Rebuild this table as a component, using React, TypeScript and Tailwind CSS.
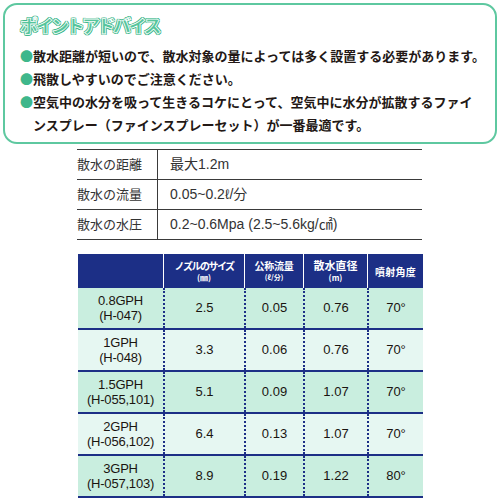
import React from 'react';

const navy = 'border-[#1c2f86]';

const specs = [
  { label: '散水の距離', value: '最大1.2m' },
  { label: '散水の流量', value: '0.05~0.2ℓ/分' },
  { label: '散水の水圧', value: '0.2~0.6Mpa (2.5~5.6kg/㎠)' },
];

const rows = [
  { name: '0.8GPH', code: '(H-047)', size: '2.5', flow: '0.05', dia: '0.76', angle: '70°' },
  { name: '1GPH', code: '(H-048)', size: '3.3', flow: '0.06', dia: '0.76', angle: '70°' },
  { name: '1.5GPH', code: '(H-055,101)', size: '5.1', flow: '0.09', dia: '1.07', angle: '70°' },
  { name: '2GPH', code: '(H-056,102)', size: '6.4', flow: '0.13', dia: '1.07', angle: '70°' },
  { name: '3GPH', code: '(H-057,103)', size: '8.9', flow: '0.19', dia: '1.22', angle: '80°' },
];

const Bullet = ({ lines }: { lines: string[] }) => (
  <div className="flex">
    <span className="w-[13px] shrink-0 text-[#3fb78b]">●</span>
    <div>
      {lines.map((l) => (
        <div key={l} className="whitespace-nowrap">{l}</div>
      ))}
    </div>
  </div>
);

export default function App() {
  return (
    <div className="w-[500px] h-[500px] overflow-hidden bg-white text-[#231815] [font-family:'Liberation_Sans','Noto_Sans_CJK_JP',sans-serif]">
      {/* ポイントアドバイス */}
      <div className="mx-[3px] mt-[3px] h-[141px] rounded-[14px] border-2 border-[#5ec8a0] pl-[15px] pt-[9px] [font-family:'Noto_Sans_CJK_JP',sans-serif]">
        <div className="h-[22px] text-[18px] leading-[22px] font-black tracking-[-2.5px] text-[#55c59b] [-webkit-text-stroke:0.8px_#ffffff] [text-shadow:1px_0_0_#3fb78b,-1px_0_0_#3fb78b,0_1px_0_#3fb78b,0_-1px_0_#3fb78b,1px_1px_0_#3fb78b,-1px_-1px_0_#3fb78b,1px_-1px_0_#3fb78b,-1px_1px_0_#3fb78b]">
          ポイントアドバイス
        </div>
        <div className="mt-[8px] text-[13px] leading-[23px] font-bold">
          <Bullet lines={['散水距離が短いので、散水対象の量によっては多く設置する必要があります。']} />
          <Bullet lines={['飛散しやすいのでご注意ください。']} />
          <Bullet
            lines={[
              '空気中の水分を吸って生きるコケにとって、空気中に水分が拡散するファイ',
              'ンスプレー（ファインスプレーセット）が一番最適です。',
            ]}
          />
        </div>
      </div>

      {/* 仕様 */}
      <div className="ml-[77px] mt-[5px] w-[345px] border-t border-[#3a3a3a]">
        {specs.map((s) => (
          <div key={s.label} className="flex h-[30px] border-b border-[#3a3a3a]">
            <div className="flex w-[81px] items-center border-r border-[#3a3a3a] text-[13px] text-[#333]">
              {s.label}
            </div>
            <div className="flex items-center pl-[12px] text-[14px] text-[#333]">{s.value}</div>
          </div>
        ))}
      </div>

      {/* ノズル表 */}
      <div className="ml-[78px] mt-[14px] w-[345px]">
        <div className="flex h-[34px] bg-[#1c2f86] font-bold text-white [font-family:'Noto_Sans_CJK_JP',sans-serif]">
          <div className="w-[85px]" />
          <div className="flex w-[81px] flex-col items-center justify-center border-l-[1.5px] border-white">
            <span className="text-[10px] leading-[13px] tracking-[-1.5px]">ノズルのサイズ</span>
            <span className="text-[8px] leading-[11px]">(㎜)</span>
          </div>
          <div className="flex w-[59px] flex-col items-center justify-center border-l-[1.5px] border-white">
            <span className="text-[10px] leading-[13px] tracking-[-0.3px]">公称流量</span>
            <span className="text-[7px] leading-[11px]">(ℓ/分)</span>
          </div>
          <div className="flex w-[64px] flex-col items-center justify-center border-l-[1.5px] border-white">
            <span className="text-[11px] leading-[13px]">散水直径</span>
            <span className="text-[8px] leading-[11px]">(m)</span>
          </div>
          <div className="flex w-[56px] items-center justify-center border-l-[1.5px] border-white">
            <span className="text-[10px] tracking-[0.3px]">噴射角度</span>
          </div>
        </div>
        {rows.map((r, i) => (
          <div
            key={r.name}
            className={`flex h-[42px] border-b-2 ${navy} text-[13px] text-[#1a1410] ${i % 2 === 0 ? 'bg-[#c9eedf]' : 'bg-[#e6f7f2]'}`}
          >
            <div className="flex w-[85px] flex-col items-center justify-center leading-[15px] tracking-[-0.2px]">
              <span>{r.name}</span>
              <span>{r.code}</span>
            </div>
            <div className={`flex w-[81px] items-center justify-center border-l-2 border-dotted ${navy}`}>{r.size}</div>
            <div className={`flex w-[59px] items-center justify-center border-l-2 border-dotted ${navy}`}>{r.flow}</div>
            <div className={`flex w-[64px] items-center justify-center border-l-2 border-dotted ${navy}`}>{r.dia}</div>
            <div className={`flex w-[56px] items-center justify-center border-l-2 border-dotted ${navy}`}>{r.angle}</div>
          </div>
        ))}
      </div>
    </div>
  );
}
